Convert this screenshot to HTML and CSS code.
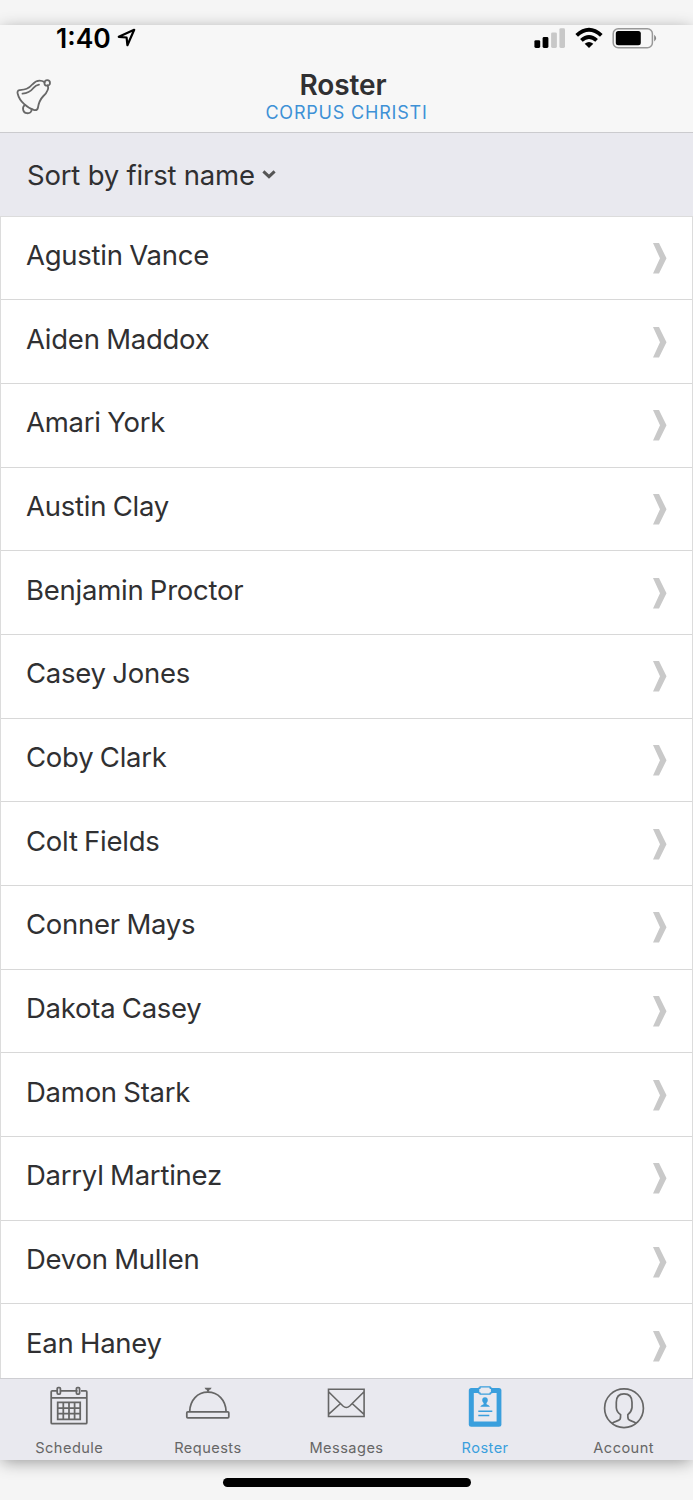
FILE: index.html
```
<!DOCTYPE html>
<html lang="en">
<head>
<meta charset="utf-8">
<title>Roster</title>
<link rel="stylesheet" href="styles.css">
</head>
<body>
<div class="phone">
  <header class="header">
    <div class="status">
      <div class="status-left">
        <span class="time">1:40</span>
        <svg class="location" width="20" height="20" viewBox="0 0 20 20"><path d="M1.8 8.8 17.2 1.8 10.4 17.2 9.6 9.5Z" fill="none" stroke="#000" stroke-width="2.2" stroke-linejoin="round"/></svg>
      </div>
      <div class="status-right">
        <svg width="32" height="21" viewBox="0 0 32 21"><rect x=".4" y="12.2" width="5.8" height="7.8" rx="1.4"/><rect x="8.6" y="9" width="5.8" height="11" rx="1.4"/><g fill="#c8c8c8"><rect x="17.1" y="4.4" width="5.8" height="15.6" rx="1.4"/><rect x="25.4" y=".2" width="5.6" height="19.8" rx="1.4"/></g></svg>
        <svg width="28" height="21" viewBox="0 0 28 21"><path d="M1.7 7.4Q14-3.8 26.3 7.4M6.4 12.4Q14 5.5 21.6 12.4" fill="none" stroke="#000" stroke-width="3.9"/><path d="m14 20-4.3-4.3q4.3-3.5 8.6 0z"/></svg>
        <svg width="46" height="21" viewBox="0 0 46 21"><rect x="1.2" y=".8" width="39.2" height="19" rx="5" fill="none" stroke="#989898" stroke-width="1.5"/><rect x="3.8" y="3" width="25" height="14.2" rx="2.5"/><path d="M42.2 6.8q4 3.4 0 6.8z" fill="#858585"/></svg>
      </div>
    </div>
    <div class="titlebar">
      <svg class="bell" width="36" height="38" viewBox="0 0 36 38"><g fill="none" stroke="#686868" stroke-width="1.8" stroke-linecap="round" stroke-linejoin="round"><path d="M28.7 3.1C24.4.8 19.9 1.6 16.5 5.3C12.5 10.2 9 10.5 3.5 11.1Q.8 11.7 1.7 14.7C3.4 22 11.2 29.3 18.4 31.1Q21.5 31.5 22 28.5C22.9 22.7 23.8 20.7 27.4 17C31.5 13 33.3 10 31.7 6.3"/><path d="M6.5 14.6C11 14.3 14.4 12.7 17.2 9.2Q19.8 6.2 23 5.7"/><circle cx="31.2" cy="3.9" r="2.8"/><path d="M8.6 26.2C5.8 28.8 6.9 33.8 10.7 34.2C13.8 34.6 16 32.9 15.6 30"/></g></svg>
      <h1 class="title">Roster</h1>
      <div class="subtitle">CORPUS CHRISTI</div>
    </div>
  </header>
  <div class="sort"><span class="sort-label">Sort by first name</span><svg width="14" height="10" viewBox="0 0 14 10"><path d="m1.4 1.4 5.6 5.2 5.6-5.2" fill="none" stroke="#555" stroke-width="3"/></svg></div>
  <main class="list" id="list"></main>
  <nav class="tabs">
    <div class="tab">
      <svg width="46" height="46" viewBox="0 0 46 46"><g fill="none" stroke="#666" stroke-width="1.75"><path d="M11 8.8H6.2Q5.2 8.8 5.2 9.8V40.7Q5.2 41.7 6.2 41.7H39.8Q40.8 41.7 40.8 40.7V9.8Q40.8 8.8 39.8 8.8H35M14.5 8.8h17M5.2 15.8h35.6"/><rect x="11.2" y="5.5" width="3.2" height="6.6" rx="1"/><rect x="30.4" y="5.5" width="3.2" height="6.6" rx="1"/><path d="M11.7 20.3h22.5v17H11.7zM17.3 20.3v17M23 20.3v17M28.6 20.3v17M11.7 26h22.5M11.7 31.6h22.5"/></g></svg>
      <span>Schedule</span>
    </div>
    <div class="tab">
      <svg width="46" height="46" viewBox="0 0 46 46"><g fill="none" stroke="#666" stroke-width="1.75" stroke-linejoin="round"><rect x="1.8" y="29.8" width="42" height="6" rx="1"/><path d="M4.7 29.5C5 18 12.5 10.2 22.8 10.2S40.8 18 41.1 29.5"/></g><path d="M19.5 5.8h7.2l-1.5 2h-1v2h-2.3v-2h-1z" fill="#666"/></svg>
      <span>Requests</span>
    </div>
    <div class="tab">
      <svg width="46" height="46" viewBox="0 0 46 46"><g fill="none" stroke="#666" stroke-width="1.6"><path d="M5.5 7.2h35.6v27.3H5.5zM5.8 10 20 24Q23.3 27 26.7 24L40.8 10M5.8 32.2 17.5 21.5M40.8 32.2 29.1 21.5"/></g></svg>
      <span>Messages</span>
    </div>
    <div class="tab active">
      <svg width="46" height="46" viewBox="0 0 46 46"><rect x="6.8" y="6" width="32.6" height="38.8" rx="2.5" fill="#3a9fdd"/><path d="M11.8 11H34.6V39.5H11.8z" fill="#e9e9ef"/><path d="M18 4.9h10.2v1.4h1.4v4.6h-1.4v1.2H18v-1.2h-1.4V6.3H18z" fill="#e9e9ef" stroke="#3a9fdd" stroke-width="1.4" stroke-linejoin="round"/><path d="M20.2 18.2a2.8 3 0 0 1 5.6 0q0 1.6-1.3 2.8v1.3q2.5.6 3.5 2.5H18.2q1-1.9 3.4-2.5v-1.3Q20.2 19.8 20.2 18.2z" fill="#3a9fdd"/><path d="M16.3 29.2h14M16.3 33.5h11" stroke="#3a9fdd" stroke-width="1.6"/></svg>
      <span>Roster</span>
    </div>
    <div class="tab">
      <svg width="46" height="46" viewBox="0 0 46 46"><g fill="none" stroke="#666" stroke-width="1.7" stroke-linejoin="round"><circle cx="23" cy="26.2" r="19.4"/><path d="M11.2 41.4Q12.5 40 15 39.4C19.5 37.9 19.7 37.5 19.6 32.6C17.6 31.2 15.5 28.2 15.3 25.7V20.2C15.3 15 18 11.8 23 11.8S31 15 31 20.2v5.5C30.7 28.2 28.7 31.2 26.8 32.6C26.7 37.5 26.9 37.9 31.4 39.4Q33.8 40 35 41.4"/></g></svg>
      <span>Account</span>
    </div>
  </nav>
</div>
<footer class="footer"><div class="home"></div></footer>
<script src="roster.js"></script>
</body>
</html>
```
FILE: styles.css
```
* { box-sizing: border-box; }
body { margin: 0; height: 1500px; padding-top: 25px; background: #f5f5f5; font-family: Inter, sans-serif; color: #303032; overflow: hidden; }
svg { display: block; flex: none; overflow: visible; }
.phone { height: 1435px; display: flex; flex-direction: column; background: #fff; box-shadow: 0 3px 16px -2px rgba(0,0,0,.42); }
.header { height: 108px; flex: none; background: #f7f7f7; border-bottom: 1px solid #cbcbce; }
.status { height: 40px; display: flex; justify-content: space-between; padding: 0 35.5px 0 56px; }
.status-left { display: flex; gap: 6px; }
.time { font-size: 26.5px; line-height: 27px; font-weight: 600; color: #000; }
.location { margin-top: 3px; }
.status-right { display: flex; gap: 9px; padding-top: 3px; }
.titlebar { height: 67px; display: grid; grid-template-columns: 60px 1fr 60px; grid-template-rows: 40px 27px; justify-items: center; }
.bell { grid-row: 1 / 3; justify-self: start; margin: 13.5px 0 0 16px; }
.title { grid-column: 2; margin: 3px 7px 0 0; font-size: 28px; line-height: 34px; font-weight: 600; letter-spacing: -.1px; }
.subtitle { grid-column: 2; font-size: 18px; line-height: 15px; letter-spacing: .8px; color: #3e91d6; white-space: nowrap; }
.sort { height: 83px; flex: none; padding: 0 27px 0 27px; display: flex; align-items: center; gap: 7px; background: #e9e9ef; font-size: 27.5px; letter-spacing: -.2px; }
.list { height: 1162px; flex: none; overflow: hidden; border: 1px solid #dcdcdc; border-width: 1px 1px 0; }
.row { height: 83.66px; border-bottom: 1px solid #d8d8d8; padding: 21px 25px 0 25px; display: flex; justify-content: space-between; font-size: 27.5px; line-height: 34px; letter-spacing: -.25px; word-spacing: -1px; }
.row:first-child { height: 83.3px; }
.row:not(:first-child) { padding-top: 21.4px; }
.arrow { margin-top: 5px; }
.tabs { height: 82px; flex: none; display: flex; background: #e9e9ef; border-top: 1px solid #ceced2; }
.tab { flex: 1; display: flex; flex-direction: column; align-items: center; color: #666; font-size: 14.6px; letter-spacing: .45px; line-height: 18px; }
.tab svg { height: 46px; margin: 3px 0 11px; }
.active { color: #3a9fdd; }
.footer { height: 40px; padding-top: 18px; display: flex; justify-content: center; align-items: flex-start; }
.home { position: relative; width: 248px; height: 8.5px; border-radius: 5px; background: #000; }
```
FILE: roster.js
```
const names = ["Agustin Vance", "Aiden Maddox", "Amari York", "Austin Clay", "Benjamin Proctor", "Casey Jones", "Coby Clark", "Colt Fields", "Conner Mays", "Dakota Casey", "Damon Stark", "Darryl Martinez", "Devon Mullen", "Ean Haney"];
const arrow = '<svg class="arrow" width="15" height="31" viewBox="0 0 15 31"><path d="M1 0h6l7.5 15.3L7 30.5H1l7-15.2z" fill="#c9c9c9"/></svg>';
document.getElementById("list").innerHTML = names.map(n => `<div class="row"><span>${n}</span>${arrow}</div>`).join("");
```
